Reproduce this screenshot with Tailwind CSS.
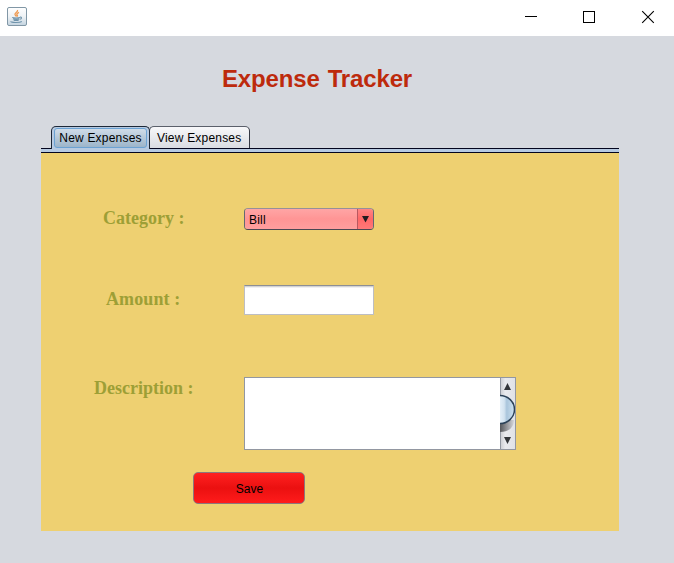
<!DOCTYPE html>
<html lang="en">
<head>
<meta charset="utf-8">
<title>Expense Tracker</title>
<script src="https://cdn.jsdelivr.net/npm/@tailwindcss/browser@4"></script>
</head>
<body class="w-[674px] h-[563px] overflow-hidden bg-[#d6d9df] font-['Liberation_Sans',Arial,sans-serif] text-black flex flex-col">
<header class="h-9 shrink-0 bg-white flex items-start justify-between pl-[7px]">
  <svg class="mt-[7px]" width="20" height="19" viewBox="0 0 20 19" fill="none">
    <defs><linearGradient id="jb" x1="0" y1="0" x2="0" y2="1"><stop stop-color="#fff"/><stop offset=".5" stop-color="#eef2f5"/><stop offset="1" stop-color="#c3d3df"/></linearGradient></defs>
    <rect x=".5" y=".5" width="19" height="18" rx="1.5" fill="url(#jb)" stroke="#8197a6"/>
    <path d="M10.5 3C11.4 5 7.4 6 8 7.6c.2.8 1.2 1.1 1.4 2.1M12 5.4c-2.5 1.2-2.6 2-1.7 2.8.4.5.2.9-.2 1.3" stroke="#f09a50" stroke-width="1.3"/>
    <path d="M5.2 10.4c1 .7 6.8.7 7.8 0M6 11.8c1.2.7 5.3.7 6.4 0M6.7 13.1c1 .6 4 .6 5 0M13 10.1c2-.3 2 1.8-.2 2.2M3.8 14.4c-.5 1.2 9 1.5 11 .1" stroke="#6f93ab" stroke-width="1.1"/>
  </svg>
  <div class="flex">
    <svg width="58" height="36" viewBox="502 0 58 36" shape-rendering="crispEdges"><path d="M525 16h12v1h-12z"/></svg>
    <svg width="58" height="36" viewBox="560 0 58 36" fill="none" stroke="#000" shape-rendering="crispEdges"><path d="M583.5 11.5h11v11h-11z"/></svg>
    <svg width="56" height="36" viewBox="618 0 56 36" fill="none" stroke="#000" stroke-width="1.1"><path d="M642.2 11.2l11.6 11.6M653.8 11.2l-11.6 11.6"/></svg>
  </div>
</header>
<main class="w-[578px] ml-[41px] flex flex-col">
  <h1 class="h-[90px] pl-[181px] pt-[27px] text-[24px] leading-8 font-bold tracking-[-0.15px] [word-spacing:1.5px] text-[#bd2a0c] whitespace-nowrap">Expense Tracker</h1>
  <div class="flex h-[22px] pl-[10px] text-[12px] tracking-[0.2px] whitespace-nowrap">
    <div class="relative z-10 w-[99px] h-[23px] rounded-t-[5px] border border-b-0 border-[#1d2838] bg-[#b7cae1] px-[2px] pt-[1px]">
      <div class="h-[20px] rounded-[3px] border border-[#6ba2d3] bg-linear-to-b from-[#d0dce8] via-[#b5c8d9] to-[#9db5ca] text-center leading-[19px]">New Expenses</div>
    </div>
    <div class="-ml-px w-[101px] h-[22px] rounded-t-[5px] border border-b-0 border-[#5b606b] border-r-[#343844] bg-linear-to-b from-[#f8f8fa] to-[#d9dce2] pl-[7px] leading-[22px]">View Expenses</div>
  </div>
  <div class="h-[5px] border-y border-[#03051e] bg-[#b7cae1]"></div>
  <form class="h-[378px] bg-[#eed071]">
    <div class="flex h-[77px] pt-[55px]">
      <label class="w-[203px] pl-[62px] font-['Liberation_Serif',serif] font-bold text-[18px] leading-[20px] text-[#9d9f36] whitespace-nowrap">Category :</label>
      <div class="w-[130px] h-[22px] rounded-[4px] border border-[#646873] border-t-[#969099] border-b-[#4b4852] flex overflow-hidden">
        <span class="flex-1 pl-1 text-[12px] leading-[22px] tracking-[0.2px] bg-linear-to-b from-[#ffa5a5] via-[#ff9595] to-[#ff9e9e]">Bill</span>
        <span class="w-4 border-l border-[#b95860] bg-linear-to-b from-[#ff8484] via-[#ff6868] to-[#ff7878]"><svg width="15" height="20" viewBox="0 0 15 20"><path d="M4 7h7L7.5 13.5z" fill="#221c20"/></svg></span>
      </div>
    </div>
    <div class="flex h-[85px] pt-[55px]">
      <label class="w-[203px] pl-[65px] font-['Liberation_Serif',serif] font-bold text-[18px] leading-[28px] tracking-[0.1px] text-[#9d9f36] whitespace-nowrap">Amount :</label>
      <div class="w-[130px] h-[30px] bg-white border border-[#bdbec3] border-t-[#8d8f95] shadow-[inset_0_1px_0_#d2d3d5,inset_0_2px_0_#f0f0f1]"></div>
    </div>
    <div class="flex h-[135px] pt-[62px]">
      <label class="w-[203px] pl-[53px] font-['Liberation_Serif',serif] font-bold text-[18px] leading-[22px] text-[#9d9f36] whitespace-nowrap">Description :</label>
      <div class="w-[272px] h-[73px] bg-white border border-[#9297a1] flex justify-end">
        <svg width="15" height="71" viewBox="0 0 15 71">
          <defs>
            <linearGradient id="track"><stop stop-color="#c9cbd0"/><stop offset=".35" stop-color="#e9eaee"/><stop offset="1" stop-color="#e0e2e7"/></linearGradient>
            <linearGradient id="thumb" gradientUnits="userSpaceOnUse" x1="0" x2="15" y1="0" y2="0"><stop stop-color="#e4eff8"/><stop offset=".28" stop-color="#d3e3f0"/><stop offset=".45" stop-color="#a9c5dc"/><stop offset="1" stop-color="#d2e5f3"/></linearGradient>
            <linearGradient id="shade"><stop stop-color="#55575b"/><stop offset="1" stop-color="#d5d6da"/></linearGradient>
          </defs>
          <path fill="url(#track)" d="M0 0h15v71H0z"/>
          <path d="M0 0h1v71H0z" fill="#9297a1"/>
          <path fill="url(#shade)" d="M0 42h14c0 7-5 12-14 12z"/>
          <ellipse cx="0" cy="31.5" rx="14.5" ry="14" fill="url(#thumb)" stroke="#2c4258" stroke-width="1.5"/>
          <path d="M4 12l3.5-7 3.5 7zM4 59h7l-3.5 7z" fill="#33363a"/>
        </svg>
      </div>
    </div>
    <div class="pl-[152px] pt-[22px]">
      <button type="button" class="block w-[112px] h-[32px] rounded-[5px] border border-[#8c777c] bg-linear-to-b from-[#ff2020] via-[#eb1010] to-[#ff1b1b] pl-px text-[12px] leading-[32px] text-center">Save</button>
    </div>
  </form>
</main>
</body>
</html>
